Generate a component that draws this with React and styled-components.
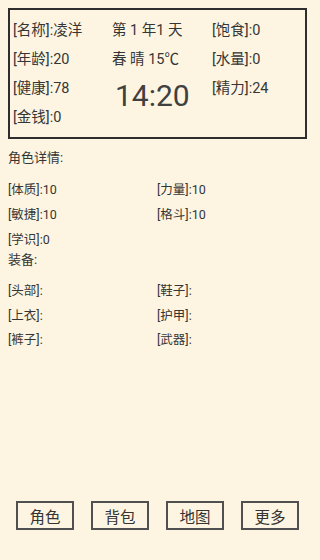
import React from 'react';
import styled, { createGlobalStyle } from 'styled-components';

const GlobalStyle = createGlobalStyle`
  html, body {
    margin: 0;
    padding: 0;
    background: #fdf5e2;
  }
  body {
    font-family: Roboto, "Noto Sans CJK SC", sans-serif;
    color: #353535;
  }
`;

const Page = styled.div`
  width: 315px;
  min-height: 100vh;
  box-sizing: border-box;
  padding: 8px 8px 30px;
  display: flex;
  flex-direction: column;
`;

const StatusBox = styled.div`
  border: 2px solid #2e2e2e;
  padding: 6px 3px 5px;
  display: grid;
  grid-template-columns: 99px 100px 1fr;
`;

const Column = styled.div`
  display: flex;
  flex-direction: column;
`;

const StatusLine = styled.div`
  font-size: 14.5px;
  line-height: 29px;
  white-space: nowrap;
`;

const Clock = styled.div`
  font-size: 30px;
  line-height: 44px;
  padding-left: 3px;
  color: #404040;
`;

const SectionTitle = styled.div`
  font-size: 13px;
  line-height: ${(p) => p.$lh || 22}px;
  margin-top: ${(p) => p.$mt || 0}px;
`;

const AttrGrid = styled.div`
  display: grid;
  grid-template-columns: 149px 1fr;
  margin-top: ${(p) => p.$mt || 0}px;
`;

const Attr = styled.div`
  font-size: 12.5px;
  line-height: ${(p) => p.$lh || 25}px;
  white-space: nowrap;
`;

const ButtonBar = styled.div`
  margin-top: auto;
  display: flex;
  justify-content: center;
  gap: 17px;
`;

const NavButton = styled.button`
  width: 58px;
  height: 29px;
  box-sizing: border-box;
  border: 2px solid #505050;
  background: transparent;
  font-family: "Noto Sans CJK SC", sans-serif;
  font-size: 15.5px;
  color: #333;
  padding: 0;
  cursor: pointer;
`;

const stats = [
  ['[体质]:10', '[力量]:10'],
  ['[敏捷]:10', '[格斗]:10'],
  ['[学识]:0', ''],
];

const gear = [
  ['[头部]:', '[鞋子]:'],
  ['[上衣]:', '[护甲]:'],
  ['[裤子]:', '[武器]:'],
];

export default function App() {
  return (
    <>
      <GlobalStyle />
      <Page>
        <StatusBox>
          <Column>
            <StatusLine>[名称]:凌洋</StatusLine>
            <StatusLine>[年龄]:20</StatusLine>
            <StatusLine>[健康]:78</StatusLine>
            <StatusLine>[金钱]:0</StatusLine>
          </Column>
          <Column>
            <StatusLine>第 1 年1 天</StatusLine>
            <StatusLine>春 晴 15℃</StatusLine>
            <Clock>14:20</Clock>
          </Column>
          <Column>
            <StatusLine>[饱食]:0</StatusLine>
            <StatusLine>[水量]:0</StatusLine>
            <StatusLine>[精力]:24</StatusLine>
          </Column>
        </StatusBox>

        <SectionTitle $mt={8}>角色详情:</SectionTitle>
        <AttrGrid $mt={8}>
          {stats.flat().map((s, i) => (
            <Attr key={i}>{s}</Attr>
          ))}
        </AttrGrid>

        <SectionTitle $lh={16}>装备:</SectionTitle>
        <AttrGrid $mt={11}>
          {gear.flat().map((s, i) => (
            <Attr key={i} $lh={24.5}>{s}</Attr>
          ))}
        </AttrGrid>

        <ButtonBar>
          <NavButton>角色</NavButton>
          <NavButton>背包</NavButton>
          <NavButton>地图</NavButton>
          <NavButton>更多</NavButton>
        </ButtonBar>
      </Page>
    </>
  );
}
